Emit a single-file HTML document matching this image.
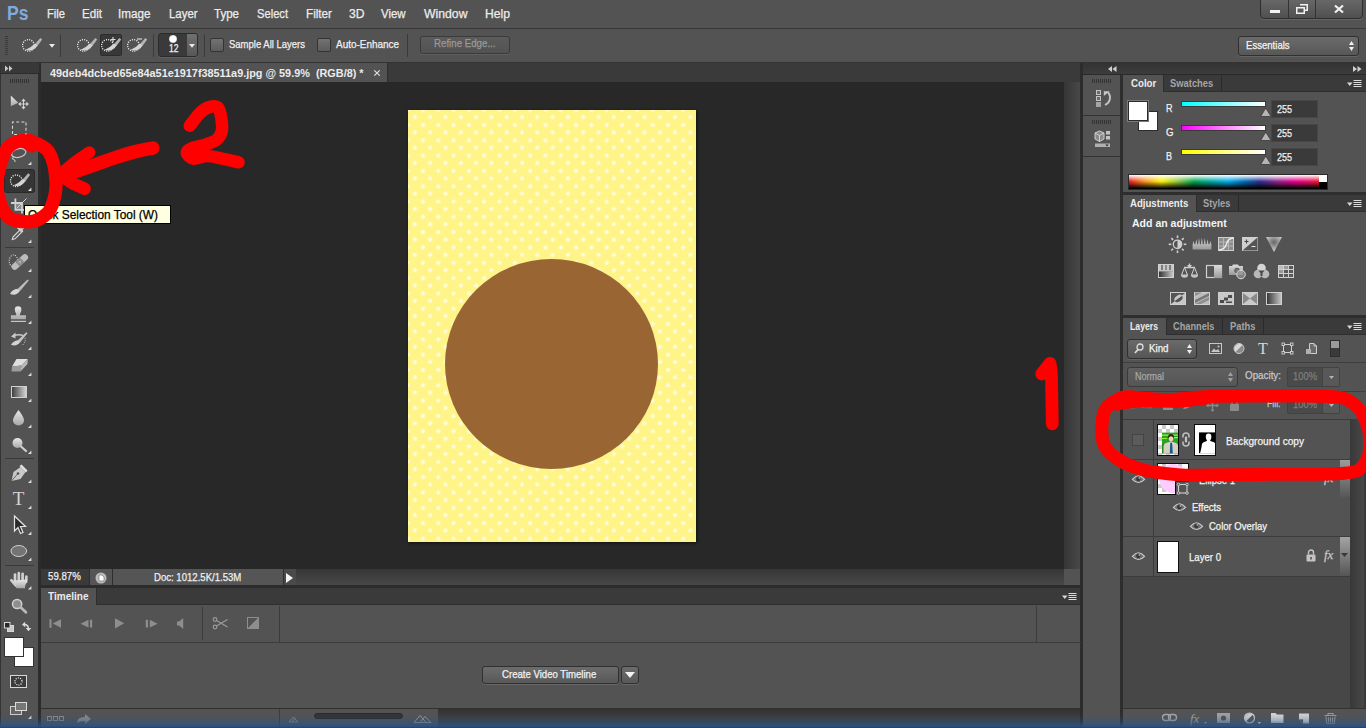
<!DOCTYPE html>
<html><head><meta charset="utf-8"><title>Ps</title>
<style>
*{box-sizing:border-box;margin:0;padding:0}
html,body{width:1366px;height:728px;overflow:hidden;background:#535353}
body{font-family:"Liberation Sans",sans-serif;font-size:11px;color:#e6e6e6;position:relative}
.a{position:absolute}
.t{position:absolute;white-space:nowrap;line-height:14px;transform-origin:0 0;margin-top:-1px;-webkit-text-stroke:.25px}
.b{font-weight:bold}
.t.b{-webkit-text-stroke:0}
svg{position:absolute;overflow:visible}
/* menu */
#menu{left:0;top:0;width:1366px;height:28px;background:#535353}
#menu .t{top:8px;color:#ececec}
/* options */
#opt{left:0;top:28px;width:1366px;height:35px;background:#535353;border-top:1px solid #383838;border-bottom:1px solid #333}
.sep{position:absolute;width:1px;background:#3a3a3a;top:5px;height:23px}
.chk{position:absolute;width:14px;height:14px;border:1px solid #333;border-radius:2px;background:linear-gradient(#727272,#5c5c5c);top:9px}
/* tabs */
.tabbar{background:#3d3d3d}
.tab{position:absolute;background:#535353;color:#e8e8e8;font-weight:bold;font-size:11px;border-right:1px solid #2e2e2e}
.tab.off{background:#424242;color:#a8a8a8}
.panel{background:#535353}
</style></head><body>
<!-- MENU BAR -->
<div id="menu" class="a">
<div class="t b" style="left:7px;top:3px;font-size:20px;line-height:22px;color:#7fabdf;transform:scaleX(0.879)">Ps</div>
<div class="t" style="left:47px;font-size:12px;transform:scaleX(0.931)">File</div>
<div class="t" style="left:82px;font-size:12px;transform:scaleX(0.967)">Edit</div>
<div class="t" style="left:118px;font-size:12px;transform:scaleX(0.975)">Image</div>
<div class="t" style="left:169px;font-size:12px;transform:scaleX(0.95)">Layer</div>
<div class="t" style="left:214px;font-size:12px;transform:scaleX(0.961)">Type</div>
<div class="t" style="left:257px;font-size:12px;transform:scaleX(0.93)">Select</div>
<div class="t" style="left:306px;font-size:12px;transform:scaleX(0.975)">Filter</div>
<div class="t" style="left:349px;font-size:12px;transform:scaleX(1.01)">3D</div>
<div class="t" style="left:381px;font-size:12px;transform:scaleX(0.95)">View</div>
<div class="t" style="left:424px;font-size:12px;transform:scaleX(1.019)">Window</div>
<div class="t" style="left:485px;font-size:12px;transform:scaleX(1.013)">Help</div>
<div class="a" style="left:1260px;top:-3px;width:103px;height:22px;border:1px solid #2e2e2e;border-radius:4px;background:linear-gradient(#6a6a6a,#505050);box-shadow:0 1px 0 #666"></div>
<div class="a" style="left:1288px;top:0;width:1px;height:18px;background:#333"></div>
<div class="a" style="left:1315px;top:0;width:1px;height:18px;background:#333"></div>
<div class="a" style="left:1270px;top:10px;width:10px;height:3px;background:#f2f2f2"></div>
<svg style="left:1296px;top:4px" width="12" height="10" viewBox="0 0 12 10"><path d="M4 0.75h7.25v5.5H9" fill="none" stroke="#f2f2f2" stroke-width="1.5"/><rect x="0.75" y="3.75" width="7.5" height="5.5" fill="none" stroke="#f2f2f2" stroke-width="1.5"/></svg>
<svg style="left:1334px;top:5px" width="10" height="8" viewBox="0 0 10 8"><path d="M1 0.5L9 7.5M9 0.5L1 7.5" stroke="#f2f2f2" stroke-width="2.2"/></svg>
</div>
<!-- OPTIONS BAR -->
<div id="opt" class="a"><div class="a" style="left:5px;top:7px;width:3px;height:20px;background:repeating-linear-gradient(#3a3a3a 0 1px,transparent 1px 2px)"></div><svg style="left:22px;top:8px" width="21" height="16" viewBox="0 0 21 16"><circle cx="6.4" cy="8.4" r="5.8" fill="none" stroke="#ececec" stroke-width="1.3" stroke-dasharray="1.1 1.18"/><path d="M18.3 .9l1.9 1.5-5 6.9-2.6-1.9z" fill="#b4b4b4"/><path d="M13 6.6Q9 10.6 3.3 13.1 12 15 15.5 8.6z" fill="#d4d4d4"/></svg><svg style="left:49px;top:15px" width="6" height="4" viewBox="0 0 6 4"><path d="M0 0h6L3 3.8z" fill="#eaeaea"/></svg><div class="sep" style="left:60px"></div><svg style="left:76.6px;top:8px" width="21" height="16" viewBox="0 0 21 16"><circle cx="6.4" cy="8.4" r="5.8" fill="none" stroke="#ececec" stroke-width="1.3" stroke-dasharray="1.1 1.18"/><path d="M18.3 .9l1.9 1.5-5 6.9-2.6-1.9z" fill="#b4b4b4"/><path d="M13 6.6Q9 10.6 3.3 13.1 12 15 15.5 8.6z" fill="#d4d4d4"/></svg><div class="a" style="left:100px;top:5px;width:22px;height:22px;background:#383838;border:1px solid #2c2c2c;border-radius:2px"></div><svg style="left:101.2px;top:8px" width="21" height="16" viewBox="0 0 21 16"><circle cx="6.4" cy="8.4" r="5.8" fill="none" stroke="#ececec" stroke-width="1.3" stroke-dasharray="1.1 1.18"/><path d="M18.3 .9l1.9 1.5-5 6.9-2.6-1.9z" fill="#b4b4b4"/><path d="M13 6.6Q9 10.6 3.3 13.1 12 15 15.5 8.6z" fill="#d4d4d4"/><path d="M9.5 2.5h5M12 0v5" stroke="#e0e0e0" stroke-width="1.1" fill="none"/></svg><svg style="left:126.6px;top:8px" width="21" height="16" viewBox="0 0 21 16"><circle cx="6.4" cy="8.4" r="5.8" fill="none" stroke="#ececec" stroke-width="1.3" stroke-dasharray="1.1 1.18"/><path d="M18.3 .9l1.9 1.5-5 6.9-2.6-1.9z" fill="#b4b4b4"/><path d="M13 6.6Q9 10.6 3.3 13.1 12 15 15.5 8.6z" fill="#d4d4d4"/><path d="M10 2h5" stroke="#e0e0e0" stroke-width="1.1" fill="none"/></svg><div class="sep" style="left:153px"></div><div class="a" style="left:158px;top:4px;width:40px;height:24px;background:#3a3a3a;border:1px solid #2c2c2c;border-radius:3px;box-shadow:0 1px 0 #606060"></div><div class="a" style="left:187px;top:5px;width:10px;height:22px;background:linear-gradient(#707070,#585858);border-radius:0 2px 2px 0"></div><div class="a" style="left:168.5px;top:5.5px;width:8px;height:8px;border-radius:50%;background:radial-gradient(circle,#fff 55%,rgba(255,255,255,0) 100%)"></div><div class="t" style="left:169px;top:15px;font-size:10px;color:#f4f4f4;line-height:12px;transform:scaleX(0.854)">12</div><svg style="left:189px;top:15px" width="6" height="4" viewBox="0 0 6 4"><path d="M0 0h6L3 3.8z" fill="#eaeaea"/></svg><div class="sep" style="left:204px"></div><div class="chk" style="left:210px"></div><div class="t" style="left:229px;top:9px;color:#f0f0f0;transform:scaleX(0.863)">Sample All Layers</div><div class="chk" style="left:317px"></div><div class="t" style="left:336px;top:9px;color:#f0f0f0;transform:scaleX(0.904)">Auto-Enhance</div><div class="sep" style="left:407px"></div><div class="a" style="left:420px;top:7px;width:90px;height:18px;border:1px solid #3a3a3a;border-radius:3px;background:linear-gradient(#5c5c5c,#525252);box-shadow:0 1px 0 #606060"></div><div class="t" style="left:434px;top:8px;color:#9a9a9a;transform:scaleX(0.882)">Refine Edge...</div><div class="a" style="left:1238px;top:7px;width:121px;height:20px;border:1px solid #303030;border-radius:3px;background:linear-gradient(#6b6b6b,#575757);box-shadow:0 1px 0 #636363"></div><div class="t" style="left:1246px;top:10px;color:#f4f4f4;transform:scaleX(0.87)">Essentials</div><svg style="left:1349px;top:12px" width="5" height="10" viewBox="0 0 5 10"><path d="M0 4L2.5 0 5 4zM0 6l2.5 4L5 6z" fill="#f0f0f0"/></svg></div>
<!-- DOC TAB BAR -->
<div class="a" style="left:38px;top:63px;width:1045px;height:20px;background:#3a3a3a"></div>
<div class="a" style="left:38px;top:63px;width:3px;height:665px;background:#2c2c2c"></div>
<div class="a" style="left:41px;top:63px;width:347px;height:19px;background:#535353;border-right:1px solid #2e2e2e"></div>
<div class="t b" style="left:50px;top:67px;font-size:11px;color:#ececec;transform:scaleX(0.987)">49deb4dcbed65e84a51e1917f38511a9.jpg @ 59.9%&nbsp; (RGB/8) *</div>
<svg style="left:374px;top:69.5px" width="6" height="6" viewBox="0 0 6 6"><path d="M.3.3l5.4 5.4M5.7.3l-5.4 5.4" stroke="#e0e0e0" stroke-width="1.2"/></svg>
<!-- CANVAS -->
<div class="a" id="canvas" style="left:41px;top:82px;width:1023px;height:487px;background:#282828;overflow:hidden">
 <div class="a" id="doc" style="left:367px;top:28px;width:288px;height:432px;background-color:#fef488;box-shadow:1px 1px 3px rgba(0,0,0,.6);
   background-image:radial-gradient(circle at 50% 50%,#fffeee 0,#fffbd2 1.3px,rgba(254,244,136,0) 2.9px),radial-gradient(circle at 50% 50%,#fffeee 0,#fffbd2 1.3px,rgba(254,244,136,0) 2.9px);
   background-size:15.32px 15.32px;background-position:-0.82px -0.62px,7.34px 7.34px"></div>
 <div class="a" style="left:404px;top:176.5px;width:213px;height:210px;border-radius:50%;background:#996633"></div>
</div>
<!-- scrollbars -->

<div class="a" style="left:1080px;top:63px;width:3px;height:665px;background:#2c2c2c"></div>
<!-- STATUS -->
<div class="a" style="left:41px;top:569px;width:1023px;height:16px;background:linear-gradient(#363636,#484848)"></div>
<div class="a" style="left:1064px;top:569px;width:16px;height:16px;background:#535353"></div>
<div class="a" style="left:1064px;top:82px;width:16px;height:487px;background:linear-gradient(90deg,#363636,#484848)"></div>
<div class="a" style="left:41px;top:569px;width:48px;height:16px;background:#3a3a3a"></div>
<div class="t" style="left:48px;top:570px;color:#f0f0f0;transform:scaleX(0.879)">59.87%</div>
<div class="a" style="left:89px;top:569px;width:24px;height:16px;background:#555;border-left:1px solid #2e2e2e;border-right:1px solid #2e2e2e"></div>
<svg style="left:95px;top:572px" width="12" height="12" viewBox="0 0 12 12"><circle cx="6" cy="6" r="5.5" fill="#bdbdbd"/><path d="M4 3h3l2 2v4H4z" fill="#fff" stroke="#666" stroke-width=".6"/></svg>
<div class="a" style="left:113px;top:569px;width:170px;height:16px;background:#555"></div>
<div class="t" style="left:154px;top:571px;color:#f0f0f0;transform:scaleX(0.871)">Doc: 1012.5K/1.53M</div>
<div class="a" style="left:283px;top:569px;width:13px;height:16px;background:#4a4a4a;border-left:1px solid #2e2e2e"></div>
<svg style="left:286px;top:573px" width="7" height="10" viewBox="0 0 7 10"><path d="M0 0l7 5-7 5z" fill="#f4f4f4"/></svg>
<!-- TOOLBOX -->
<div class="a" id="tools" style="left:0;top:63px;width:38px;height:665px;background:#535353;border-left:1px solid #333">
<div class="a" style="left:0;top:0;width:38px;height:11px;background:#383838;border-bottom:1px solid #2c2c2c"></div>
<svg style="left:-1px;top:0" width="38" height="665" viewBox="0 63 38 665"><defs><linearGradient id="gI" x1="0" y1="0" x2="0" y2="1"><stop offset="0" stop-color="#e8e8e8"/><stop offset="1" stop-color="#a8a8a8"/></linearGradient><linearGradient id="gH" x1="0" y1="0" x2="1" y2="0"><stop offset="0" stop-color="#3a3a3a"/><stop offset="1" stop-color="#d8d8d8"/></linearGradient></defs><path d="M5 65.5l3.5 3L5 71.5zM9 65.5l3.5 3L9 71.5z" fill="#c8c8c8"/><rect x="10" y="79" width="1" height="4" fill="#333"/><rect x="12" y="79" width="1" height="4" fill="#333"/><rect x="14" y="79" width="1" height="4" fill="#333"/><rect x="16" y="79" width="1" height="4" fill="#333"/><rect x="18" y="79" width="1" height="4" fill="#333"/><rect x="20" y="79" width="1" height="4" fill="#333"/><rect x="22" y="79" width="1" height="4" fill="#333"/><rect x="24" y="79" width="1" height="4" fill="#333"/><rect x="26" y="79" width="1" height="4" fill="#333"/><rect x="28" y="79" width="1" height="4" fill="#333"/><path d="M10.8 95.5v10.7l7.5-3.4z" fill="url(#gI)"/><path d="M23.5 99.5v9M19 104h9" stroke="#d4d4d4" stroke-width="1.1" fill="none"/><path d="M23.5 98.6l-2.2 2.6h4.4zM23.5 109.4l-2.2-2.6h4.4zM18.1 104l2.6-2.2v4.4zM28.9 104l-2.6-2.2v4.4z" fill="#d4d4d4"/><rect x="12.5" y="122" width="13.5" height="12.5" fill="none" stroke="#d8d8d8" stroke-width="1.1" stroke-dasharray="3 2.2" stroke-dashoffset="1.5"/><ellipse cx="18.7" cy="153" rx="7.3" ry="4.3" transform="rotate(-14 18.7 153)" fill="none" stroke="#c4c4c4" stroke-width="1.3"/><path d="M13.5 157.2q-2 1.5 0 2.3 2 .6 1.4 2.5" fill="none" stroke="#c4c4c4" stroke-width="1.1"/><path d="M31.4 165v-3.4l-3.4 3.4z" fill="#e0e0e0"/><rect x="4.5" y="169.5" width="30" height="23" rx="2" fill="#353535" stroke="#2a2a2a"/><g transform="translate(9.9 172.4)"><circle cx="6.4" cy="8.4" r="5.8" fill="none" stroke="#ececec" stroke-width="1.3" stroke-dasharray="1.1 1.18"/><path d="M18.3 .9l1.9 1.5-5 6.9-2.6-1.9z" fill="#b4b4b4"/><path d="M13 6.6Q9 10.6 3.3 13.1 12 15 15.5 8.6z" fill="#d4d4d4"/></g><path d="M31.4 191v-3.4l-3.4 3.4z" fill="#e0e0e0"/><rect x="16.5" y="204" width="5" height="5" fill="#8c8c8c"/><path d="M15.4 198.6v11.2h11M11 203h11v10.6" fill="none" stroke="#d0d0d0" stroke-width="1.8"/><path d="M16.5 208.5l10-10" stroke="#d0d0d0" stroke-width="1"/><path d="M31.4 217v-3.4l-3.4 3.4z" fill="#e0e0e0"/><path d="M12.3 239.5l.8-2.6 7.6-7.6 1.9 1.9-7.6 7.6z" fill="#555" stroke="#dcdcdc" stroke-width="1.1"/><path d="M19.5 227.5l2.7-2.7q1.5-1.2 2.7 0t0 2.7l-2.7 2.7 1 1-1.6 1.6-4.7-4.7 1.6-1.6z" fill="#d0d0d0"/><path d="M31.4 243v-3.4l-3.4 3.4z" fill="#e0e0e0"/><rect x="5" y="247" width="29" height="1" fill="#3a3a3a"/><ellipse cx="13.5" cy="261" rx="4.3" ry="6" fill="none" stroke="#e0e0e0" stroke-width="1.1" stroke-dasharray="1 1.3"/><rect x="-3.2" y="-10" width="6.4" height="20" rx="3.2" transform="translate(19.8 262) rotate(48)" fill="#bcbcbc"/><rect x="-3.2" y="-3.2" width="6.4" height="6.4" transform="translate(19.8 262) rotate(48)" fill="#8a8a8a"/><g fill="#d8d8d8"><circle cx="19" cy="261.2" r=".5"/><circle cx="20.6" cy="261.2" r=".5"/><circle cx="19" cy="262.8" r=".5"/><circle cx="20.6" cy="262.8" r=".5"/></g><path d="M31.4 272v-3.4l-3.4 3.4z" fill="#e0e0e0"/><path d="M27.6 279.5l1.2 1-9 10.7-2.5-2z" fill="#bebebe"/><path d="M17.4 288.8q-4.9.7-7.4 5 6 2.7 9.9-2.8z" fill="#d4d4d4"/><path d="M31.4 298v-3.4l-3.4 3.4z" fill="#e0e0e0"/><path d="M16.3 315.3c0-2.2-1.5-3.2-1.5-5.8a3.3 3.3 0 0 1 6.6 0c0 2.6-1.5 3.6-1.5 5.8h6v4h-15v-4z" fill="url(#gI)"/><rect x="11" y="320.8" width="15" height="1.2" fill="#c8c8c8"/><path d="M31.4 324v-3.4l-3.4 3.4z" fill="#e0e0e0"/><path d="M26.3 332.3l1.2 1-7.5 9.2-2.4-1.9z" fill="#c4c4c4"/><path d="M17.8 340.2q-4.5.6-6.8 4.6 5.6 2.4 9.2-2.7z" fill="#d4d4d4"/><path d="M14 335.5q5-1.5 9 0" stroke="#c8c8c8" stroke-width="1.7" fill="none"/><path d="M11 336.5l4.5-4v6z" fill="#c8c8c8"/><path d="M25 338q1.2 3.5-2.5 7" fill="none" stroke="#d8d8d8" stroke-width="1" stroke-dasharray="1 1.2"/><path d="M31.4 350v-3.4l-3.4 3.4z" fill="#e0e0e0"/><path d="M16.5 359h11.3l-6.3 6.5-9.5 1z" fill="#dedede"/><path d="M12 366.5l9.5-1-1 6h-9z" fill="#9c9c9c"/><path d="M21.5 365.5l6.3-6.5-.3 5-7 7.5z" fill="#b8b8b8"/><path d="M31.4 376v-3.4l-3.4 3.4z" fill="#e0e0e0"/><rect x="11.5" y="386.5" width="15" height="11" fill="url(#gH)" stroke="#d0d0d0"/><path d="M31.4 402v-3.4l-3.4 3.4z" fill="#e0e0e0"/><path d="M18.5 410q5.5 7 5.5 10.5a5.5 5 0 0 1-11 0q0-3.5 5.5-10.5z" fill="url(#gI)"/><path d="M31.4 428v-3.4l-3.4 3.4z" fill="#e0e0e0"/><circle cx="17.5" cy="443" r="5" fill="url(#gI)"/><path d="M21 446.5l5 4.5" stroke="#cfcfcf" stroke-width="2.2" stroke-linecap="round"/><path d="M31.4 454v-3.4l-3.4 3.4z" fill="#e0e0e0"/><rect x="5" y="458" width="29" height="1" fill="#3a3a3a"/><path d="M11.5 481l2-9 7-5 5 5-5 7z" fill="#c8c8c8"/><path d="M21.5 464.5l6 6-1.5 2-6.5-6.5z" fill="#e0e0e0"/><circle cx="18" cy="473.5" r="1.3" fill="#535353"/><path d="M11.5 481l6-7" stroke="#535353" stroke-width="0.8"/><path d="M31.4 483v-3.4l-3.4 3.4z" fill="#e0e0e0"/><text x="18.5" y="505" font-family="Liberation Serif,serif" font-size="19" fill="#d4d4d4" text-anchor="middle">T</text><path d="M31.4 509v-3.4l-3.4 3.4z" fill="#e0e0e0"/><path d="M14.5 516v15l3.5-3.5 2.5 6 2.5-1-2.5-6h5z" fill="#2a2a2a" stroke="#e4e4e4" stroke-width="1.2"/><path d="M31.4 535v-3.4l-3.4 3.4z" fill="#e0e0e0"/><ellipse cx="18.8" cy="551" rx="7.8" ry="5.5" fill="#747474" stroke="#d0d0d0" stroke-width="1"/><path d="M31.4 561v-3.4l-3.4 3.4z" fill="#e0e0e0"/><rect x="5" y="565" width="29" height="1" fill="#3a3a3a"/><g stroke="#d0d0d0" stroke-width="2.7" stroke-linecap="round" fill="none"><path d="M15 581.5v-7M18.8 581v-8M22.6 581v-7.2M26.1 582l.3-5.3M15.8 585.5l-4.4-5.2"/></g><path d="M13.7 580.5l13.7-1-2.4 7v1.7h-8.8v-1.7z" fill="url(#gI)"/><path d="M31.4 589.5v-3.4l-3.4 3.4z" fill="#e0e0e0"/><circle cx="17.1" cy="604" r="4.6" fill="#8e8e8e" stroke="#d0d0d0" stroke-width="1.5"/><path d="M20.9 607.5l5 4.8" stroke="#b8b8b8" stroke-width="2.8" stroke-linecap="round"/><rect x="7.5" y="625.5" width="6" height="6" fill="#c8c8c8" stroke="#d8d8d8"/><rect x="4.5" y="622.5" width="5.5" height="5.5" fill="#2a2a2a" stroke="#d8d8d8"/><path d="M24 624.5q4.5 0 4.5 4.5" fill="none" stroke="#dcdcdc" stroke-width="1.4"/><path d="M22 624.5l3.2-2.8v5.6zM28.5 631.2l-2.8-3.2h5.6z" fill="#dcdcdc"/><rect x="14.5" y="647.5" width="19" height="19" fill="#fff" stroke="#333"/><rect x="4.5" y="637.5" width="19" height="19" fill="#fff" stroke="#333"/><rect x="10.5" y="675.5" width="16" height="12" fill="#3c3c3c" stroke="#d8d8d8"/><circle cx="18.5" cy="681.5" r="3.6" fill="none" stroke="#fff" stroke-width="1.2" stroke-dasharray="1 1.26"/><rect x="10.5" y="706.5" width="11" height="8" fill="#666" stroke="#d0d0d0"/><rect x="15.5" y="702.5" width="11" height="8" fill="#777" stroke="#dcdcdc"/><path d="M31.4 719v-3.4l-3.4 3.4z" fill="#e0e0e0"/></svg>
</div>
<!-- TIMELINE -->
<div class="a" style="left:41px;top:585px;width:1040px;height:3px;background:#2c2c2c"></div>
<div class="a" style="left:41px;top:588px;width:1039px;height:17px;background:#3a3a3a;border-bottom:1px solid #2e2e2e"></div>
<div class="a" style="left:41px;top:588px;width:56px;height:17px;background:#535353;border-right:1px solid #2e2e2e"></div>
<div class="t b" style="left:48px;top:590px;color:#ececec;transform:scaleX(0.912)">Timeline</div>
<svg style="left:1061.5px;top:593px" width="15" height="8" viewBox="0 0 15 8"><path d="M0 2.5h5.6L2.8 6z" fill="#d8d8d8"/><path d="M6.5 .5h8M6.5 2.5h8M6.5 4.5h8M6.5 6.5h8" stroke="#dcdcdc" stroke-width="1"/></svg>
<div class="a" style="left:41px;top:605px;width:1039px;height:103px;background:#535353"></div>
<div class="a" style="left:41px;top:642px;width:1040px;height:1px;background:#3c3c3c"></div>
<div class="a" style="left:202px;top:607px;width:1px;height:33px;background:#3c3c3c"></div>
<div class="a" style="left:279px;top:606px;width:1px;height:36px;background:#3c3c3c"></div>
<div class="a" style="left:1036px;top:606px;width:1px;height:36px;background:#3c3c3c"></div>
<svg style="left:41px;top:606px" width="240" height="36" viewBox="41 606 240 36">
<g fill="#8e8e8e" stroke="none">
<rect x="49.5" y="619.2" width="2" height="8.6"/><path d="M61 619.2v8.6l-8.2-4.3z"/>
<path d="M88.5 619.8v7.7l-7.9-3.85z"/><rect x="90" y="619.8" width="2.2" height="7.7"/>
<path d="M115 618.3v10.1l9.2-5.05z"/>
<rect x="145.8" y="619.8" width="2.2" height="7.7"/><path d="M149.8 619.8v7.7l7.7-3.85z"/>
<path d="M177 621.5h2.2l4-3.5v11l-4-3.5h-2.2z"/>
</g>
<g fill="none" stroke="#9a9a9a" stroke-width="1.2">
<circle cx="215" cy="619.5" r="1.8"/><circle cx="215" cy="627" r="1.8"/><path d="M216.5 620.5l11 6.5M216.5 626l11-6.5"/>
</g>
<rect x="247.5" y="617.5" width="11" height="11" fill="none" stroke="#8e8e8e"/><path d="M258 618v10h-10z" fill="#8e8e8e"/>
</svg>
<!-- create video timeline -->
<div class="a" style="left:482px;top:666px;width:137px;height:18px;border:1px solid #303030;border-radius:3px;background:linear-gradient(#6c6c6c,#585858);box-shadow:0 1px 0 #666"></div>
<div class="t" style="left:502px;top:668px;color:#f2f2f2;transform:scaleX(0.873)">Create Video Timeline</div>
<div class="a" style="left:621px;top:666px;width:18px;height:18px;border:1px solid #303030;border-radius:3px;background:linear-gradient(#6c6c6c,#585858);box-shadow:0 1px 0 #666"></div>
<svg style="left:625px;top:672px" width="10" height="6" viewBox="0 0 10 6"><path d="M0 0h10L5 6z" fill="#f2f2f2"/></svg>
<!-- bottom row -->
<div class="a" style="left:41px;top:708px;width:1039px;height:20px;background:linear-gradient(#323232,#3e3e3e 45%);border-top:1px solid #303030"></div>
<div class="a" style="left:41px;top:709px;width:238px;height:19px;background:#535353"></div>
<div class="a" style="left:280px;top:709px;width:158px;height:19px;background:#535353"></div>
<div class="a" style="left:279px;top:709px;width:1px;height:19px;background:#3c3c3c"></div>
<svg style="left:41px;top:709px" width="400" height="19" viewBox="41 709 400 19">
<g fill="none" stroke="#8a8a8a" stroke-width="1"><rect x="47.5" y="716.5" width="4" height="4"/><rect x="53.5" y="716.5" width="4" height="4"/><rect x="59.5" y="716.5" width="4" height="4"/></g>
<path d="M77 723q0-6 8-6v-3l6 5-6 5v-3q-5 0-8 2z" fill="#8a8a8a"/>
<path d="M289 722l4.5-5 4.5 5z M292 722l3-3.5" fill="none" stroke="#8a8a8a" stroke-width="1"/>
<rect x="314.5" y="713.5" width="88" height="5" rx="2.5" fill="#333" stroke="#2a2a2a"/>
<path d="M414 722.5l6-7 6 7zM420 722.5l5-6 6 6z" fill="none" stroke="#9a9a9a" stroke-width="1"/>
</svg>
<!-- RIGHT DOCK -->
<div class="a" style="left:1083px;top:63px;width:283px;height:665px;background:#535353"></div>
<div class="a" style="left:1083px;top:63px;width:283px;height:12px;background:linear-gradient(#333,#3c3c3c);border-bottom:1px solid #2a2a2a"></div>
<svg style="left:1108px;top:66px" width="9" height="6" viewBox="0 0 9 6"><path d="M4 0v6L0 3zM8.5 0v6l-4-3z" fill="#d0d0d0"/></svg>
<svg style="left:1353px;top:66px" width="9" height="6" viewBox="0 0 9 6"><path d="M0 0v6l4-3zM4.5 0v6l4-3z" fill="#d0d0d0"/></svg>
<!-- icon strip -->
<div class="a" style="left:1120px;top:75px;width:3px;height:653px;background:#2e2e2e"></div>
<div class="a" style="left:1083px;top:115px;width:37px;height:1px;background:#333"></div>
<div class="a" style="left:1083px;top:156px;width:37px;height:1px;background:#333"></div>
<div class="a" style="left:1092px;top:79px;width:19px;height:4px;background:repeating-linear-gradient(90deg,#333 0 1px,transparent 1px 2px)"></div>
<div class="a" style="left:1092px;top:120px;width:19px;height:4px;background:repeating-linear-gradient(90deg,#333 0 1px,transparent 1px 2px)"></div>
<svg style="left:1095px;top:89px" width="17" height="19" viewBox="1095 89 17 19"><rect x="1096.5" y="90.5" width="4" height="4" fill="#6a6a6a" stroke="#c4c4c4"/><rect x="1096.5" y="96.5" width="4" height="4" fill="#6a6a6a" stroke="#c4c4c4"/><rect x="1096" y="102" width="5" height="5" fill="#a4a4a4"/><path d="M1103.8 91.2h5.8l-5.8 4.8z" fill="#c8c8c8"/><path d="M1108 92.2c3.5 4.5 2.5 10-3 12.8" fill="none" stroke="#c0c0c0" stroke-width="1.9"/></svg>
<svg style="left:1094px;top:130px" width="18" height="18" viewBox="0 0 18 18"><path d="M5.5 1l4.5 2v6l-4.5 2.5-4.5-2.5v-6z" fill="#8a8a8a" stroke="#d0d0d0" stroke-width="1"/><path d="M1 3l4.5 2.5 4.5-2.5M5.5 5.5v6" fill="none" stroke="#d0d0d0" stroke-width="1"/><rect x="12" y="1" width="4" height="3.5" fill="#c4c4c4"/><rect x="12" y="6" width="4" height="3.5" fill="#c4c4c4"/><rect x="1" y="13.5" width="15" height="3.5" fill="#b0b0b0"/><path d="M11.5 14.5h3l-1.5 2z" fill="#222"/></svg>
<!-- COLOR PANEL -->
<div class="a" style="left:1123px;top:75px;width:243px;height:17px;background:#3a3a3a;border-bottom:1px solid #2e2e2e"></div>
<div class="a" style="left:1123px;top:75px;width:41px;height:17px;background:#535353;border-right:1px solid #2e2e2e"></div>
<div class="a" style="left:1164px;top:75px;width:58px;height:16px;background:#3a3a3a;border-right:1px solid #2a2a2a"></div>
<div class="t b" style="left:1131px;top:77px;color:#ececec;transform:scaleX(0.881)">Color</div>
<div class="t b" style="left:1170px;top:77px;color:#a4a4a4;transform:scaleX(0.853)">Swatches</div>
<svg style="left:1346.5px;top:80px" width="15" height="8" viewBox="0 0 15 8"><path d="M0 2.5h5.6L2.8 6z" fill="#d8d8d8"/><path d="M6.5 .5h8M6.5 2.5h8M6.5 4.5h8M6.5 6.5h8" stroke="#dcdcdc" stroke-width="1"/></svg>
<div class="a" style="left:1138px;top:111px;width:20px;height:20px;background:#fff;border:1px solid #2a2a2a"></div>
<div class="a" style="left:1128px;top:101px;width:20px;height:20px;background:#fff;border:1px solid #2a2a2a;outline:1px solid #7a7a7a"></div>
<div class="t" style="left:1166px;top:102px;color:#f2f2f2;transform:scaleX(0.818)">R</div>
<div class="t" style="left:1166px;top:126px;color:#f2f2f2;transform:scaleX(0.877)">G</div>
<div class="t" style="left:1166px;top:150px;color:#f2f2f2;transform:scaleX(0.818)">B</div>
<div class="a" style="left:1181px;top:101px;width:85px;height:6px;border:1px solid #3a3a3a;background:linear-gradient(90deg,#00ffff,#ffffff)"></div>
<div class="a" style="left:1181px;top:125px;width:85px;height:6px;border:1px solid #3a3a3a;background:linear-gradient(90deg,#ff00ff,#ffffff)"></div>
<div class="a" style="left:1181px;top:149px;width:85px;height:6px;border:1px solid #3a3a3a;background:linear-gradient(90deg,#ffff00,#ffffff)"></div>
<svg style="left:1260px;top:107px" width="12" height="58" viewBox="0 0 12 58"><g fill="#b4b4b4" stroke="#383838" stroke-width=".8"><path d="M.6 9.5l5.2-8.5 5.2 8.5z"/><path d="M.6 33.5l5.2-8.5 5.2 8.5z"/><path d="M.6 57.5l5.2-8.5 5.2 8.5z"/></g></svg>
<div class="a" style="left:1271px;top:100px;width:47px;height:18px;background:#3a3a3a;border:1px solid #464646"></div>
<div class="a" style="left:1271px;top:124px;width:47px;height:18px;background:#3a3a3a;border:1px solid #464646"></div>
<div class="a" style="left:1271px;top:148px;width:47px;height:18px;background:#3a3a3a;border:1px solid #464646"></div>
<div class="t" style="left:1277px;top:103px;color:#f2f2f2;transform:scaleX(0.817)">255</div>
<div class="t" style="left:1277px;top:127px;color:#f2f2f2;transform:scaleX(0.817)">255</div>
<div class="t" style="left:1277px;top:151px;color:#f2f2f2;transform:scaleX(0.817)">255</div>
<div class="a" style="left:1128px;top:174px;width:200px;height:16px;border:1px solid #2a2a2a;background:linear-gradient(rgba(255,255,255,1) 0,rgba(255,255,255,0) 46%,rgba(0,0,0,0) 46%,rgba(0,0,0,1) 96%),linear-gradient(90deg,#ed1c24 0,#f7941d 8%,#fff200 16.5%,#8dc63f 25%,#00a651 33%,#00a99d 41%,#00aeef 50%,#0072bc 58%,#2e3192 66%,#92278f 75%,#ec008c 84%,#ed145b 92%,#ed1c24 96%)"></div>
<div class="a" style="left:1319px;top:175px;width:8px;height:7px;background:#fff"></div>
<div class="a" style="left:1319px;top:182px;width:8px;height:7px;background:#000"></div>
<div class="a" style="left:1123px;top:192px;width:243px;height:3px;background:#2e2e2e"></div>
<!-- ADJUSTMENTS PANEL -->
<div class="a" style="left:1123px;top:195px;width:243px;height:17px;background:#3a3a3a;border-bottom:1px solid #2e2e2e"></div>
<div class="a" style="left:1123px;top:195px;width:74px;height:17px;background:#535353;border-right:1px solid #2e2e2e"></div>
<div class="a" style="left:1197px;top:195px;width:42px;height:16px;background:#3a3a3a;border-right:1px solid #2a2a2a"></div>
<div class="t b" style="left:1130px;top:197px;color:#ececec;transform:scaleX(0.874)">Adjustments</div>
<div class="t b" style="left:1203px;top:197px;color:#a4a4a4;transform:scaleX(0.845)">Styles</div>
<svg style="left:1346.5px;top:200px" width="15" height="8" viewBox="0 0 15 8"><path d="M0 2.5h5.6L2.8 6z" fill="#d8d8d8"/><path d="M6.5 .5h8M6.5 2.5h8M6.5 4.5h8M6.5 6.5h8" stroke="#dcdcdc" stroke-width="1"/></svg>
<div class="t b" style="left:1132px;top:217px;color:#f4f4f4;transform:scaleX(0.957)">Add an adjustment</div>
<svg style="left:1150px;top:230px" width="160" height="80" viewBox="1150 230 160 80"><defs><linearGradient id="aV" x1="0" y1="0" x2="0" y2="1"><stop offset="0" stop-color="#dcdcdc"/><stop offset="1" stop-color="#9a9a9a"/></linearGradient><linearGradient id="aH" x1="0" y1="0" x2="1" y2="0"><stop offset="0" stop-color="#333"/><stop offset="1" stop-color="#c8c8c8"/></linearGradient><radialGradient id="aR" cx=".5" cy=".35" r=".6"><stop offset="0" stop-color="#666"/><stop offset="1" stop-color="#d0d0d0"/></radialGradient></defs><circle cx="1177.5" cy="244.3" r="4.2" fill="none" stroke="#cfcfcf" stroke-width="1.3"/><path d="M1177.5 240.10000000000002a4.2 4.2 0 0 1 0 8.4z" fill="#cfcfcf"/><path d="M1183.7 244.3L1186.3 244.3" stroke="#cfcfcf" stroke-width="1.6"/><path d="M1181.9 248.7L1183.7 250.5" stroke="#cfcfcf" stroke-width="1.6"/><path d="M1177.5 250.5L1177.5 253.1" stroke="#cfcfcf" stroke-width="1.6"/><path d="M1173.1 248.7L1171.3 250.5" stroke="#cfcfcf" stroke-width="1.6"/><path d="M1171.3 244.3L1168.7 244.3" stroke="#cfcfcf" stroke-width="1.6"/><path d="M1173.1 239.9L1171.3 238.1" stroke="#cfcfcf" stroke-width="1.6"/><path d="M1177.5 238.1L1177.5 235.5" stroke="#cfcfcf" stroke-width="1.6"/><path d="M1181.9 239.9L1183.7 238.1" stroke="#cfcfcf" stroke-width="1.6"/><path d="M1192.6 249.5V243.5L1192.6999999999998 244.2L1193.6 241L1194.5 244.2L1195.3999999999999 244.2L1196.3 239.3L1197.2 244.2L1198.1 244.2L1199 238L1199.9 244.2L1201.0 244.2L1201.9 237.5L1202.8000000000002 244.2L1203.8999999999999 244.2L1204.8 238L1205.7 244.2L1206.6999999999998 244.2L1207.6 239.3L1208.5 244.2L1209.5 244.2L1210.4 241L1211.3000000000002 244.2L1211.4 243.5V249.5z" fill="url(#aV)"/><rect x="1218.5" y="237.5" width="15" height="13" fill="#8c8c8c" stroke="#d0d0d0"/><path d="M1218.5 242h15M1218.5 246h15M1223.5 237.5v13M1228.5 237.5v13" stroke="#c0c0c0" stroke-width=".8" fill="none"/><path d="M1219 250q6-.5 7.5-6t7-6" fill="none" stroke="#f0f0f0" stroke-width="1.3"/><rect x="1242.5" y="237.5" width="15" height="13" fill="#d0d0d0" stroke="#d0d0d0"/><path d="M1257.5 237.5v13h-15z" fill="#555"/><path d="M1244.5 241.5h4M1246.5 239.5v4" stroke="#444" stroke-width="1.1"/><path d="M1251.5 246.5h4" stroke="#e0e0e0" stroke-width="1.1"/><path d="M1266 237h16l-8 15z" fill="url(#aR)"/><rect x="1158.5" y="264.5" width="15" height="13" fill="#8a8a8a" stroke="#d0d0d0"/><rect x="1159" y="265" width="14" height="5" fill="#c8c8c8"/><rect x="1161" y="265" width="2" height="5" fill="#7c7c7c"/><rect x="1165" y="265" width="2" height="5" fill="#8c8c8c"/><rect x="1169" y="265" width="2" height="5" fill="#7c7c7c"/><rect x="1159" y="271.5" width="14" height="5.5" fill="url(#aH)"/><path d="M1158.5 270.7h15" stroke="#d0d0d0"/><path d="M1189.5 263.5v3M1184 267.5h11" stroke="#d0d0d0" stroke-width="1.3" fill="none"/><path d="M1187 265h5l-2.5 3z" fill="#d0d0d0"/><path d="M1184.5 267.5l-3 7.5h6zM1194.5 267.5l-3 7.5h6z" fill="none" stroke="#d0d0d0" stroke-width="1"/><path d="M1181 275h7a3.5 2.8 0 0 1-7 0zM1191 275h7a3.5 2.8 0 0 1-7 0z" fill="#c4c4c4"/><rect x="1206.5" y="265.5" width="15" height="12" fill="#555" stroke="#d0d0d0" stroke-width="1.2"/><rect x="1214" y="265" width="8" height="13" fill="url(#aV)"/><path d="M1229 266h3l1-1.5h5l1 1.5h4v9h-14z" fill="url(#aV)"/><circle cx="1237" cy="270.5" r="2.3" fill="#777" stroke="#555" stroke-width="1"/><circle cx="1241" cy="274.5" r="4.3" fill="rgba(150,150,150,.7)" stroke="#dcdcdc" stroke-width="1"/><circle cx="1261.5" cy="268" r="4.3" fill="#d4d4d4"/><circle cx="1258" cy="274" r="4.3" fill="#b8b8b8"/><circle cx="1265" cy="274" r="4.3" fill="#b8b8b8"/><path d="M1258.5 270.5h6l-2 2.5v3h-2v-3z" fill="#4a4a4a"/><rect x="1278.5" y="265.5" width="15" height="12" fill="#5a5a5a" stroke="#d0d0d0"/><path d="M1283.5 265.5v12M1288.5 265.5v12M1278.5 269.5h15M1278.5 273.5h15" stroke="#d0d0d0" stroke-width="1" fill="none"/><rect x="1279" y="266" width="4" height="3" fill="#bbb"/><rect x="1284" y="266" width="4" height="3" fill="#999"/><rect x="1279" y="270" width="4" height="3" fill="#999"/><rect x="1170.5" y="292.5" width="15" height="12" fill="#c8c8c8" stroke="#d0d0d0"/><path d="M1171 304v-11h14z" fill="#555"/><ellipse cx="1178.5" cy="298.5" rx="4.5" ry="3" transform="rotate(-35 1178.5 298.5)" fill="#555"/><path d="M1174.8 301a4.5 3 -35 0 1 7.4-5.2z" fill="#c8c8c8"/><rect x="1194.5" y="292.5" width="15" height="12" fill="#bdbdbd" stroke="#d0d0d0"/><path d="M1195 300l14-7v3l-14 7z" fill="#777"/><path d="M1195 304l14-7v3l-8 4z" fill="#8e8e8e"/><path d="M1195 296l7-3.5h-7z" fill="#8e8e8e"/><rect x="1218.5" y="292.5" width="15" height="12" fill="#c8c8c8" stroke="#d0d0d0"/><path d="M1220 300h4v-2.5h4v-2.5h4v3h-4v2.5h-4v2.5h-4z" fill="#4a4a4a"/><path d="M1226 303h6v-1.5h-6z" fill="#4a4a4a"/><rect x="1242.5" y="292.5" width="15" height="12" fill="#cacaca" stroke="#d0d0d0"/><path d="M1243 293l7 5.5-7 5.5zM1257 293l-7 5.5 7 5.5z" fill="#8a8a8a"/><rect x="1266.5" y="292.5" width="15" height="12" fill="url(#aH)" stroke="#d0d0d0"/></svg>
<div class="a" style="left:1123px;top:315px;width:243px;height:3px;background:#2e2e2e"></div>
<!-- LAYERS PANEL -->
<div class="a" style="left:1123px;top:318px;width:243px;height:17px;background:#3a3a3a;border-bottom:1px solid #2e2e2e"></div><div class="a" style="left:1123px;top:318px;width:44px;height:17px;background:#535353;border-right:1px solid #2e2e2e"></div><div class="a" style="left:1167px;top:318px;width:56px;height:16px;background:#3a3a3a;border-right:1px solid #2a2a2a"></div><div class="a" style="left:1224px;top:318px;width:40px;height:16px;background:#3a3a3a;border-right:1px solid #2a2a2a"></div><div class="t b" style="left:1130px;top:320px;color:#ececec;transform:scaleX(0.789)">Layers</div><div class="t b" style="left:1173px;top:320px;color:#a4a4a4;transform:scaleX(0.838)">Channels</div><div class="t b" style="left:1230px;top:320px;color:#a4a4a4;transform:scaleX(0.851)">Paths</div><svg style="left:1346.5px;top:323px" width="15" height="8" viewBox="0 0 15 8"><path d="M0 2.5h5.6L2.8 6z" fill="#d8d8d8"/><path d="M6.5 .5h8M6.5 2.5h8M6.5 4.5h8M6.5 6.5h8" stroke="#dcdcdc" stroke-width="1"/></svg><div class="a" style="left:1127px;top:339px;width:70px;height:20px;border:1px solid #303030;border-radius:3px;background:linear-gradient(#6a6a6a,#565656);box-shadow:0 1px 0 #626262"></div><svg style="left:1134px;top:343px" width="10" height="11" viewBox="0 0 10 11"><circle cx="6" cy="4" r="3" fill="none" stroke="#e0e0e0" stroke-width="1.3"/><path d="M4 6.5l-3 3.5" stroke="#e0e0e0" stroke-width="1.6"/></svg><div class="t" style="left:1149px;top:342px;color:#f4f4f4;transform:scaleX(0.886)">Kind</div><svg style="left:1187px;top:344px" width="5" height="10" viewBox="0 0 5 10"><path d="M0 4L2.5 0 5 4zM0 6l2.5 4L5 6z" fill="#f0f0f0"/></svg><svg style="left:1205px;top:339px" width="140" height="20" viewBox="1205 339 140 20"><rect x="1209.5" y="343.5" width="12" height="10" fill="none" stroke="#c8c8c8" stroke-width="1"/><path d="M1211 352l3-3.5 2 2 2-1.5 2 3z" fill="#c8c8c8"/><circle cx="1218.5" cy="346.5" r="1" fill="#c8c8c8"/><circle cx="1239" cy="348.5" r="5" fill="#8a8a8a" stroke="#c8c8c8" stroke-width="1"/><path d="M1242.5 345l-7 7a5 5 0 0 1 7-7z" fill="#d8d8d8"/><text x="1263" y="354" font-family="Liberation Serif,serif" font-size="16" fill="#d8d8d8" text-anchor="middle">T</text><rect x="1283.5" y="344.5" width="8" height="8" fill="none" stroke="#d0d0d0" stroke-width="1"/><g fill="#535353" stroke="#d0d0d0" stroke-width=".9"><rect x="1282" y="343" width="2.5" height="2.5"/><rect x="1290.5" y="343" width="2.5" height="2.5"/><rect x="1282" y="351.5" width="2.5" height="2.5"/><rect x="1290.5" y="351.5" width="2.5" height="2.5"/></g><path d="M1309.5 343.5h4.5l2.5 2.5v7.5h-7z" fill="#6a6a6a" stroke="#d0d0d0" stroke-width="1"/><path d="M1314 343.5v2.5h2.5" fill="none" stroke="#d0d0d0" stroke-width=".9"/><rect x="1306" y="349" width="5" height="5" fill="#b0b0b0"/><rect x="1330.5" y="340.5" width="9" height="16" fill="#3a3a3a" stroke="#2e2e2e"/><rect x="1331" y="341" width="8" height="7" fill="#9a9a9a"/></svg><div class="a" style="left:1123px;top:362px;width:243px;height:1px;background:#3e3e3e"></div><div class="a" style="left:1127px;top:367px;width:111px;height:20px;border:1px solid #3a3a3a;border-radius:3px;background:linear-gradient(#606060,#565656)"></div><div class="t" style="left:1135px;top:370px;color:#a8a8a8;transform:scaleX(0.818)">Normal</div><svg style="left:1228px;top:372px" width="5" height="10" viewBox="0 0 5 10"><path d="M0 4L2.5 0 5 4zM0 6l2.5 4L5 6z" fill="#a0a0a0"/></svg><div class="t" style="left:1245px;top:369px;color:#c8c8c8;transform:scaleX(0.892)">Opacity:</div><div class="a" style="left:1287px;top:367px;width:53px;height:20px;border:1px solid #424242;border-radius:2px;background:#4a4a4a"></div><div class="a" style="left:1322px;top:368px;width:17px;height:18px;background:#585858;border-left:1px solid #444"></div><div class="t" style="left:1293px;top:370px;color:#7e7e7e;transform:scaleX(0.853)">100%</div><svg style="left:1328.5px;top:375.5px" width="5" height="3" viewBox="0 0 5 3"><path d="M0 0h5L2.5 3z" fill="#b4b4b4"/></svg><div class="a" style="left:1123px;top:391px;width:243px;height:1px;background:#3e3e3e"></div><div class="t" style="left:1130px;top:398px;color:#9a9a9a;transform:scaleX(0.837)">Lock:</div><svg style="left:1160px;top:398px" width="85" height="14" viewBox="1160 398 85 14"><g fill="#8a8a8a"><rect x="1163" y="402" width="5" height="8"/><rect x="1168" y="402" width="5" height="4" fill="#777"/><rect x="1168" y="406" width="5" height="4"/><path d="M1183 409q1-4 9-6-2 6-9 6z"/><path d="M1212.5 400v11M1207 405.5h11" stroke="#8a8a8a" stroke-width="1.3"/><path d="M1212.5 399l-2 2.5h4zM1212.5 412l-2-2.5h4zM1206 405.5l2.5-2v4zM1219 405.5l-2.5-2v4z"/><rect x="1230" y="404" width="9" height="7" rx="1"/><path d="M1232 404v-2a2.5 2.5 0 0 1 5 0v2" fill="none" stroke="#8a8a8a" stroke-width="1.3"/></g></svg><div class="t" style="left:1267px;top:397px;color:#c8c8c8;transform:scaleX(0.789)">Fill:</div><div class="a" style="left:1287px;top:395px;width:53px;height:19px;border:1px solid #424242;border-radius:2px;background:#4a4a4a"></div><div class="a" style="left:1322px;top:396px;width:17px;height:17px;background:#585858;border-left:1px solid #444"></div><div class="t" style="left:1293px;top:398px;color:#7e7e7e;transform:scaleX(0.853)">100%</div><svg style="left:1328.5px;top:403.5px" width="5" height="3" viewBox="0 0 5 3"><path d="M0 0h5L2.5 3z" fill="#b4b4b4"/></svg><div class="a" style="left:1123px;top:419px;width:227px;height:289px;background:#474747;border-top:1px solid #3a3a3a"></div><div class="a" style="left:1350px;top:419px;width:16px;height:289px;background:linear-gradient(90deg,#383838 0,#474747 80%,#474747 86%,#3a3a3a 90%)"></div><div class="a" style="left:1123px;top:420px;width:227px;height:40px;background:#535353;border-bottom:1px solid #3c3c3c"></div><div class="a" style="left:1153px;top:420px;width:1px;height:40px;background:#3c3c3c"></div><div class="a" style="left:1123px;top:460px;width:227px;height:77px;background:#535353;border-bottom:1px solid #3c3c3c"></div><div class="a" style="left:1153px;top:460px;width:1px;height:77px;background:#3c3c3c"></div><div class="a" style="left:1123px;top:537px;width:227px;height:40px;background:#535353;border-bottom:1px solid #3c3c3c"></div><div class="a" style="left:1153px;top:537px;width:1px;height:40px;background:#3c3c3c"></div><div class="a" style="left:1132px;top:434px;width:12px;height:12px;background:#5c5c5c;border:1px solid #444"></div><svg style="left:1157px;top:424px" width="22" height="32" viewBox="0 0 22 32"><rect x=".5" y=".5" width="21" height="31" fill="#fff" stroke="#0c0c0c"/><g fill="#cbcbcb"><rect x="5" y="1" width="4" height="4"/><rect x="13" y="1" width="4" height="4"/><rect x="1" y="5" width="4" height="4"/><rect x="9" y="5" width="4" height="4"/><rect x="17" y="5" width="4" height="4"/><rect x="5" y="9" width="4" height="4"/><rect x="13" y="9" width="4" height="4"/><rect x="1" y="13" width="4" height="4"/><rect x="9" y="13" width="4" height="4"/><rect x="17" y="13" width="4" height="4"/><rect x="5" y="17" width="4" height="4"/><rect x="13" y="17" width="4" height="4"/><rect x="1" y="21" width="4" height="4"/><rect x="9" y="21" width="4" height="4"/><rect x="17" y="21" width="4" height="4"/><rect x="5" y="25" width="4" height="4"/><rect x="13" y="25" width="4" height="4"/><rect x="1" y="29" width="4" height="2"/><rect x="9" y="29" width="4" height="2"/><rect x="17" y="29" width="4" height="2"/></g><rect x="5" y="8.6" width="16" height="21" fill="#27a51f"/><rect x="5" y="10.5" width="16" height="1.5" fill="#8be03a"/><rect x="15" y="13" width="6" height="1.2" fill="#b8ec40"/><rect x="5" y="14" width="5" height="1" fill="#9be840"/><rect x="5" y="20" width="3" height="9" fill="#1a8a18"/><path d="M6.5 29.6v-7.5q.3-2.8 4-3.6l2.2-.6h2.6l2.2.6q3.5.9 3.5 3.6v7.5z" fill="#d6d0c2"/><ellipse cx="14" cy="14.6" rx="2.3" ry="2.8" fill="#ead2c0"/><path d="M11 14.8q-.6-4.6 3-4.8 3.6.2 3 4.8-.8-2.6-3-2.6t-3 2.6z" fill="#3c2016"/><rect x="13.2" y="17" width="1.8" height="1.5" fill="#d8b8a4"/><path d="M13.2 18.8h2l.6 10.8h-3z" fill="#1d5a8c"/><path d="M13.2 18.8l-2 1.8M15.2 18.8l2 1.8" stroke="#efeadc" stroke-width=".9"/></svg><svg style="left:1182px;top:432px" width="8" height="15" viewBox="0 0 8 15"><path d="M1 5.5v-1.5a3 3 0 0 1 6 0v1.5M1 9.5v1.5a3 3 0 0 0 6 0v-1.5" fill="none" stroke="#bdbdbd" stroke-width="1.6"/><rect x="2.9" y="4.6" width="2.2" height="5.8" rx=".8" fill="#c4c4c4"/></svg><svg style="left:1194px;top:424px" width="22" height="32" viewBox="0 0 22 32"><rect x=".5" y=".5" width="21" height="31" fill="#fff" stroke="#0c0c0c"/><rect x="5" y="8.4" width="16" height="20.8" fill="#000"/><path d="M6 29.2l.6-2 .8-3.5.6-4q.8-1.8 4.2-2.4l1-.8q-1.4-1.5-1.4-3.6 0-3.3 2.8-3.3t2.8 3.3q0 2.1-1.4 3.6l1 .8q3 .5 4 1.7v10.2z" fill="#fff"/></svg><div class="t" style="left:1226px;top:435px;color:#f4f4f4;transform:scaleX(0.918)">Background copy</div><svg style="left:1132px;top:475px" width="13" height="9" viewBox="0 0 13 9"><path d="M.4 4.3Q6.5-2.6 12.6 4.3 6.5 10.6 .4 4.3z" fill="#6a6a6a" stroke="#cdcdcd" stroke-width="1.1"/><circle cx="6.3" cy="4" r="2.7" fill="#383838" stroke="#9a9a9a" stroke-width=".5"/><circle cx="7.3" cy="3" r=".8" fill="#d8d8d8"/></svg><svg style="left:1157px;top:463px" width="33" height="32" viewBox="0 0 33 32"><defs><clipPath id="eC"><rect x="1" y="1" width="30" height="30"/></clipPath></defs><rect x=".5" y=".5" width="31" height="31" fill="#fff" stroke="#0c0c0c"/><g fill="#cbcbcb"><rect x="5" y="1" width="4" height="4"/><rect x="21" y="1" width="4" height="4"/><rect x="1" y="5" width="4" height="4"/><rect x="1" y="21" width="4" height="4"/><rect x="5" y="25" width="4" height="4"/><rect x="1" y="13" width="3" height="4"/></g><ellipse cx="16.2" cy="15.5" rx="14" ry="14.5" fill="#ffccff" clip-path="url(#eC)"/><rect x="18.5" y="18.5" width="15" height="14" fill="#535353"/><path d="M18.5 32V18.5H32" stroke="#0c0c0c" fill="none"/><rect x="21.5" y="21.5" width="8.5" height="8.5" fill="none" stroke="#d0d0d0" stroke-width="1.1"/><g fill="#535353" stroke="#d0d0d0" stroke-width=".9"><circle cx="21.5" cy="21.5" r="1.3"/><circle cx="30" cy="21.5" r="1.3"/><circle cx="21.5" cy="30" r="1.3"/><circle cx="30" cy="30" r="1.3"/></g></svg><div class="t" style="left:1199px;top:474px;color:#f4f4f4;transform:scaleX(0.866)">Ellipse 1</div><div class="t" style="left:1324px;top:472px;color:#c8c8c8;font-style:italic;font-size:13px;font-family:'Liberation Serif',serif">fx</div><svg style="left:1173px;top:503px" width="13" height="9" viewBox="0 0 13 9"><path d="M.4 4.3Q6.5-2.6 12.6 4.3 6.5 10.6 .4 4.3z" fill="#6a6a6a" stroke="#cdcdcd" stroke-width="1.1"/><circle cx="6.3" cy="4" r="2.7" fill="#383838" stroke="#9a9a9a" stroke-width=".5"/><circle cx="7.3" cy="3" r=".8" fill="#d8d8d8"/></svg><div class="t" style="left:1192px;top:501px;color:#f4f4f4;transform:scaleX(0.868)">Effects</div><svg style="left:1190px;top:522px" width="13" height="9" viewBox="0 0 13 9"><path d="M.4 4.3Q6.5-2.6 12.6 4.3 6.5 10.6 .4 4.3z" fill="#6a6a6a" stroke="#cdcdcd" stroke-width="1.1"/><circle cx="6.3" cy="4" r="2.7" fill="#383838" stroke="#9a9a9a" stroke-width=".5"/><circle cx="7.3" cy="3" r=".8" fill="#d8d8d8"/></svg><div class="t" style="left:1209px;top:520px;color:#f4f4f4;transform:scaleX(0.863)">Color Overlay</div><div class="a" style="left:1340px;top:460px;width:10px;height:38px;background:linear-gradient(#9c9c9c,#555)"></div><div class="a" style="left:1340px;top:537px;width:10px;height:39px;background:linear-gradient(#a4a4a4,#555)"></div><svg style="left:1341px;top:553px" width="7" height="4" viewBox="0 0 7 4"><path d="M0 0h7L3.5 4z" fill="#383838"/></svg><svg style="left:1132px;top:552px" width="13" height="9" viewBox="0 0 13 9"><path d="M.4 4.3Q6.5-2.6 12.6 4.3 6.5 10.6 .4 4.3z" fill="#6a6a6a" stroke="#cdcdcd" stroke-width="1.1"/><circle cx="6.3" cy="4" r="2.7" fill="#383838" stroke="#9a9a9a" stroke-width=".5"/><circle cx="7.3" cy="3" r=".8" fill="#d8d8d8"/></svg><div class="a" style="left:1157px;top:541px;width:22px;height:32px;background:#fff;border:1px solid #111"></div><div class="t" style="left:1189px;top:551px;color:#f4f4f4;transform:scaleX(0.872)">Layer 0</div><svg style="left:1306px;top:549px" width="10" height="13" viewBox="0 0 10 13"><rect x=".5" y="5.5" width="9" height="7" rx="1" fill="#c4c4c4"/><path d="M2.5 5.5v-2a2.5 2.5 0 0 1 5 0v2" fill="none" stroke="#c4c4c4" stroke-width="1.4"/><rect x="4.3" y="8" width="1.4" height="2.5" fill="#444"/></svg><div class="t" style="left:1324px;top:549px;color:#c8c8c8;font-style:italic;font-size:13px;font-family:'Liberation Serif',serif">fx</div><div class="a" style="left:1123px;top:708px;width:243px;height:20px;background:#535353;border-top:1px solid #333"></div><svg style="left:1155px;top:709px" width="190" height="19" viewBox="1155 709 190 19"><g fill="none" stroke="#a8a8a8" stroke-width="1.4"><rect x="1162.5" y="714.5" width="8" height="6" rx="3"/><rect x="1168.5" y="714.5" width="8" height="6" rx="3"/></g><text x="1190" y="723" font-family="Liberation Serif,serif" font-style="italic" font-size="13" fill="#a8a8a8">fx</text><path d="M1204 722h3l-1.5 2z" fill="#a8a8a8"/><rect x="1217" y="713" width="13" height="10" fill="#a0a0a0"/><circle cx="1223.5" cy="718" r="2.6" fill="#535353"/><circle cx="1249.5" cy="718" r="5" fill="#555" stroke="#d0d0d0" stroke-width="1.2"/><path d="M1253 714.5l-7 7a5 5 0 0 1 7-7z" fill="#d0d0d0"/><path d="M1257.5 722h3.5l-1.7 2.2z" fill="#e0e0e0"/><path d="M1271 713h4.5l1.5 1.5h6.5v8.5h-12.5z" fill="#d4d4d4"/><path d="M1299 713.5h10v10h-5.5l-4.5-4.5z" fill="#d0d0d0"/><path d="M1299 719h4.5v4.5" fill="#535353" stroke="#d0d0d0" stroke-width=".8"/><g fill="none" stroke="#9a9a9a" stroke-width="1.1"><path d="M1324.5 715.5h12M1328 715v-1.5h5v1.5M1326 716.5l.7 7h7.6l.7-7M1328.5 717.5v5M1330.5 717.5v5M1332.5 717.5v5"/></g></svg>
<!-- TOOLTIP -->
<div class="a" style="left:24px;top:205px;width:147px;height:19px;background:#ffffe1;border:1px solid #000"></div>
<div class="t" style="left:28px;top:209px;color:#000;font-size:12px;transform:scaleX(0.991)">Quick Selection Tool (W)</div>
<!-- blue bottom gradient -->
<div class="a" style="left:0;top:712px;width:1366px;height:16px;background:linear-gradient(rgba(40,84,138,0) 0,rgba(40,84,138,.06) 25%,rgba(40,84,138,.26) 50%,rgba(40,84,138,.6) 75%,rgba(38,80,132,.92) 93%,rgba(26,62,110,1) 100%)"></div>
<!-- ANNOTATIONS -->
<svg style="left:0;top:0" width="1366" height="728" viewBox="0 0 1366 728"><g fill="none" stroke="#fe0000" stroke-linecap="round" stroke-linejoin="round"><path d="M28.8 140.3C32.1 142.2 44.0 144.8 48.5 151.5C53.0 158.2 55.4 171.8 56.0 180.8C56.6 189.8 54.1 199.6 52.0 205.5C49.9 211.4 47.3 213.8 43.5 216.5C39.7 219.2 35.0 221.9 29.0 221.8C22.9 221.7 12.5 221.9 7.2 216.0C1.9 210.1 -2.7 197.2 -3.0 186.5C-3.3 175.8 1.3 159.2 5.3 151.5C9.3 143.8 16.6 141.4 21.0 140.5C25.4 139.6 29.8 145.1 31.5 146.0" stroke-width="13.2"/><path d="M63.5 175.0C65.7 174.4 71.5 173.0 76.9 171.2C82.4 169.4 89.8 166.7 96.2 164.4C102.6 162.2 109.0 159.8 115.4 157.7C121.8 155.6 128.3 153.5 134.6 151.9C140.8 150.3 149.8 148.7 152.9 148.1" stroke-width="13.5"/><path d="M62 173L76 161.5 89.4 152.3" stroke-width="12"/><path d="M63 177L73 183.5 84.6 188.8" stroke-width="12.5"/><path d="M189.8 125.8C191.7 123.5 197.4 115.4 200.9 112.2C204.4 109.0 207.9 107.4 210.8 106.7C213.7 106.0 216.4 106.0 218.2 107.9C219.9 109.9 220.7 114.6 221.3 118.4C221.9 122.2 222.6 127.3 221.9 130.8C221.2 134.3 219.7 137.1 217.0 139.4C214.3 141.7 209.9 143.0 205.8 144.4C201.7 145.8 195.4 146.7 192.2 148.1C189.0 149.5 186.5 151.2 186.7 153.0C186.9 154.8 190.1 158.1 193.5 158.6C196.9 159.1 202.3 156.1 207.0 156.1C211.7 156.1 216.6 157.6 221.9 158.6C227.2 159.6 235.8 161.7 238.6 162.3" stroke-width="12.5"/><path d="M1041.7 374L1050 363.4C1051 368 1051.5 372 1051.5 377.8L1052.3 423.8" stroke-width="12.8"/><path d="M1105.5 409.0C1106.8 406.9 1108.8 405.2 1111.0 403.5C1113.2 401.8 1116.2 400.1 1119.0 399.0C1121.8 397.9 1119.8 396.7 1128.0 396.8C1136.2 396.9 1154.5 399.6 1168.0 399.5C1181.5 399.4 1191.9 397.0 1209.0 396.4C1226.1 395.8 1250.3 396.0 1270.5 396.0C1290.7 396.0 1316.7 395.5 1330.0 396.4C1343.3 397.3 1344.8 398.2 1350.4 401.5C1356.0 404.8 1360.2 409.2 1363.5 415.9C1366.8 422.6 1370.0 433.3 1370.0 441.5C1370.0 449.7 1367.9 459.7 1363.6 465.0C1359.3 470.3 1359.5 471.8 1344.0 473.3C1328.5 474.9 1293.0 474.0 1270.5 474.3C1248.0 474.6 1224.0 474.9 1209.0 475.0C1194.0 475.1 1190.4 475.5 1180.6 474.9C1170.8 474.3 1158.0 472.7 1150.4 471.4C1142.8 470.1 1139.3 468.7 1135.0 467.3C1130.7 465.9 1127.7 464.6 1124.7 463.1C1121.7 461.6 1119.4 460.1 1117.0 458.5C1114.6 456.9 1112.4 455.2 1110.5 453.5C1108.6 451.8 1107.0 449.9 1105.8 448.0C1104.5 446.1 1103.6 444.3 1103.0 442.0C1102.4 439.7 1102.2 436.8 1102.0 434.0C1101.8 431.2 1101.8 428.0 1102.0 425.0C1102.2 422.0 1102.4 418.7 1103.0 416.0C1103.6 413.3 1104.2 411.1 1105.5 409.0z" stroke-width="13"/><path d="M1117 404.5C1130 400 1150 401.2 1170 401.5S1195 400 1206 398" stroke-width="12.5"/></g></svg>
</body></html>
